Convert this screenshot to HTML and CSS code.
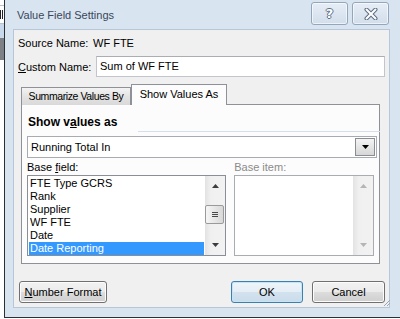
FILE: index.html
```html
<!DOCTYPE html>
<html lang="en">
<head>
  <meta charset="UTF-8" />
  <title>Value Field Settings</title>
  <link rel="stylesheet" href="styles.css">
</head>
<body>

<div class="screen">
  <div class="desk">
    <div class="desk-top"></div>
    <div class="desk-cell"><i></i></div>
    <div class="desk-sel"></div>
    <div class="desk-dark"></div>
    <div class="desk-rest"></div>
  </div>

  <div class="window">
    <div class="titlebar">
      <span class="title">Value Field Settings</span>
      <div class="caption-btns">
        <div class="cap-btn help">?</div>
        <div class="cap-btn">
          <svg width="14" height="12" viewBox="0 0 14 12">
            <path d="M2.5 1.5 L11.5 10.5 M11.5 1.5 L2.5 10.5" stroke="#5d6d82" stroke-width="4" stroke-linecap="round"/>
            <path d="M2.5 1.5 L11.5 10.5 M11.5 1.5 L2.5 10.5" stroke="#fff" stroke-width="2" stroke-linecap="round"/>
          </svg>
        </div>
      </div>
    </div>

    <div class="client">
      <div class="row source">
        <span class="label">Source Name:</span>
        <span>WF FTE</span>
      </div>
      <div class="row custom">
        <span class="label"><u>C</u>ustom Name:</span>
        <div class="textbox">Sum of WF FTE</div>
      </div>

      <div class="tabs">
        <div class="tab">Summarize Values By</div>
        <div class="tab active">Show Values As</div>
      </div>

      <div class="panel">
        <div class="group-title">Show v<u>a</u>lues as</div>
        <div class="combo">
          <span class="combo-text">Running Total In</span>
          <span class="drop">
            <svg width="7" height="4" viewBox="0 0 7 4"><path d="M0 0 H7 L3.5 4 Z" fill="#000"/></svg>
          </span>
        </div>

        <div class="lists">
          <div class="field base">
            <div class="caption">Base <u>f</u>ield:</div>
            <div class="listbox">
              <ul class="items">
                <li>FTE Type GCRS</li>
                <li>Rank</li>
                <li>Supplier</li>
                <li>WF FTE</li>
                <li>Date</li>
                <li class="selected">Date Reporting</li>
              </ul>
              <div class="vscroll">
                <div class="arrow">
                  <svg width="7" height="4" viewBox="0 0 7 4"><path d="M0 4 H7 L3.5 0 Z" fill="#3c3c3c"/></svg>
                </div>
                <div class="track">
                  <div class="thumb"><i></i><i></i><i></i></div>
                </div>
                <div class="arrow">
                  <svg width="7" height="4" viewBox="0 0 7 4"><path d="M0 0 H7 L3.5 4 Z" fill="#3c3c3c"/></svg>
                </div>
              </div>
            </div>
          </div>

          <div class="field item disabled">
            <div class="caption">Base item:</div>
            <div class="listbox">
              <ul class="items"></ul>
              <div class="vscroll">
                <div class="arrow">
                  <svg width="7" height="4" viewBox="0 0 7 4"><path d="M0 4 H7 L3.5 0 Z" fill="#b5b5b5"/></svg>
                </div>
                <div class="track"></div>
                <div class="arrow">
                  <svg width="7" height="4" viewBox="0 0 7 4"><path d="M0 0 H7 L3.5 4 Z" fill="#b5b5b5"/></svg>
                </div>
              </div>
            </div>
          </div>
        </div>
      </div>

      <div class="footer">
        <button class="btn number"><u>N</u>umber Format</button>
        <div class="spacer"></div>
        <button class="btn ok">OK</button>
        <button class="btn cancel">Cancel</button>
      </div>
    </div>

    <svg class="grip" width="8" height="8" viewBox="0 0 8 8">
      <path d="M7 1 L1 7 M7 4 L4 7" stroke="#9aa5b3" stroke-width="1"/>
    </svg>
  </div>
</div>

</body>
</html>
```

FILE: styles.css
```css
* {
  box-sizing: border-box;
}

body {
  margin: 0;
  font-family: "Liberation Sans", Arial, sans-serif;
  font-size: 11px;
  color: #000;
}

.screen {
  display: flex;
  align-items: flex-start;
  width: 400px;
  height: 319px;
  overflow: hidden;
  background: #fff;
}

/* bit of the excel sheet behind the dialog */
.desk {
  width: 4px;
  height: 319px;
  display: flex;
  flex-direction: column;
  background: #fff;
}

.desk-top {
  height: 6px;
  border-bottom: 1px solid #b8c2cf;
}

.desk-cell {
  height: 18px;
  border-bottom: 1px solid #b8c2cf;
  padding-top: 4px;
}

.desk-cell i {
  display: block;
  width: 3px;
  height: 9px;
  border-left: 1px solid #222;
  border-right: 1px solid #222;
}

.desk-sel {
  height: 14px;
  background: #c9d9ec;
}

.desk-dark {
  height: 22px;
  background: #7d8084;
}

.desk-rest {
  flex: 1;
  background: #fff;
}

.window {
  position: relative;
  width: 396px;
  height: 318px;
  display: flex;
  flex-direction: column;
  background: #d9e4f1;
  border-left: 1px solid #2c2f33;
  border-bottom: 1px solid #2c2f33;
  padding: 0 0 9px 8px;
  flex-shrink: 0;
}

.titlebar {
  height: 29px;
  width: 377px;
  display: flex;
  justify-content: space-between;
  align-items: flex-start;
}

.title {
  margin: 8px 0 0 4px;
  font-size: 11px;
  line-height: 15px;
  color: #38475a;
}

.caption-btns {
  display: flex;
  gap: 4px;
  margin: 2px 1px 0 0;
}

.cap-btn {
  width: 37px;
  height: 23px;
  border: 1px solid #94a6bc;
  border-radius: 3px;
  background: linear-gradient(#e6edf6, #d2deec);
  box-shadow: inset 0 0 0 1px rgba(255, 255, 255, 0.6);
  display: flex;
  align-items: center;
  justify-content: center;
}

.cap-btn.help {
  font-family: "DejaVu Sans", sans-serif;
  font-weight: bold;
  font-size: 13px;
  color: #fff;
  text-shadow: 1px 0 #5d6d82, -1px 0 #5d6d82, 0 1px #5d6d82, 0 -1px #5d6d82;
}

.client {
  width: 377px;
  height: 279px;
  background: #f0f0f0;
  border: 1px solid #b7c6d8;
  padding: 5px 4px 0 4px;
  display: flex;
  flex-direction: column;
}

.row {
  display: flex;
  align-items: center;
}

.row .label {
  width: 78px;
  flex-shrink: 0;
}

.source {
  height: 16px;
}

.source .label {
  width: 75px;
}

.custom {
  margin-top: 5px;
  height: 21px;
}

.textbox {
  flex: 1;
  height: 21px;
  background: #fff;
  border: 1px solid #c2c6cc;
  border-top-color: #abadb3;
  padding: 0 3px;
  line-height: 19px;
}

.tabs {
  display: flex;
  align-items: flex-end;
  height: 21px;
  margin: 7px 0 -1px 3px;
  position: relative;
  z-index: 1;
}

.tab {
  height: 18px;
  width: 110px;
  border: 1px solid #8e9197;
  border-bottom: none;
  background: linear-gradient(#f3f3f3, #e3e3e3 50%, #d9d9d9);
  text-align: center;
  font-size: 10.5px;
  line-height: 17px;
  letter-spacing: -0.4px;
  white-space: nowrap;
  overflow: hidden;
}

.tab.active {
  height: 21px;
  width: 96px;
  background: #fcfcfc;
  font-size: 11px;
  line-height: 19px;
  letter-spacing: 0;
}

.panel {
  height: 160px;
  margin: 0 5px 0 3px;
  border: 1px solid #8e9197;
  background: #fcfcfc;
  padding: 0 5px 0 5px;
  display: flex;
  flex-direction: column;
}

.group-title {
  margin: 9px 0 0 1px;
  font-weight: bold;
  font-size: 12px;
  line-height: 16px;
}

.group-title::after {
  content: "";
  display: block;
  height: 1px;
  margin: 1px -6px 0 110px;
  background: #d5dfe9;
}

.combo {
  margin-top: 4px;
  height: 22px;
  width: 350px;
  display: flex;
  align-items: stretch;
  background: #fff;
  border: 1px solid #a8abb1;
  padding: 1px;
}

.combo-text {
  flex: 1;
  padding-left: 2px;
  line-height: 18px;
}

.drop {
  width: 20px;
  display: flex;
  align-items: center;
  justify-content: center;
  border: 1px solid #8a8d92;
  background: linear-gradient(#f4f4f4, #e5e5e5 50%, #d6d6d6);
}

.lists {
  display: flex;
  gap: 8px;
  margin-top: 2px;
}

.field {
  display: flex;
  flex-direction: column;
}

.field.base {
  width: 201px;
}

.field.item {
  width: 141px;
}

.caption {
  height: 15px;
  line-height: 14px;
}

.disabled .caption {
  color: #8b8b8b;
}

.listbox {
  height: 81px;
  display: flex;
  background: #fff;
  border: 1px solid #8b8f95;
}

.disabled .listbox {
  border-color: #a9adb2;
}

.items {
  flex: 1;
  list-style: none;
  margin: 0;
  padding: 1px 1px 0 1px;
}

.items li {
  height: 13px;
  line-height: 13px;
  padding-left: 1px;
  white-space: nowrap;
}

.items li.selected {
  background: #3399ff;
  color: #fff;
}

.vscroll {
  width: 20px;
  display: flex;
  flex-direction: column;
  background: linear-gradient(90deg, #e3e3e3, #f0f0f0 30%, #f2f2f2);
}

.arrow {
  height: 20px;
  display: flex;
  align-items: center;
  justify-content: center;
}

.track {
  flex: 1;
  display: flex;
  flex-direction: column;
  justify-content: center;
  padding-bottom: 2px;
}

.thumb {
  height: 19px;
  margin: 0 1px 0 0;
  border: 1px solid #9a9a9a;
  border-radius: 2px;
  background: linear-gradient(90deg, #f6f6f6, #e7e7e7 50%, #d8d8d8);
  display: flex;
  flex-direction: column;
  justify-content: center;
  align-items: center;
  gap: 1px;
}

.thumb i {
  display: block;
  width: 6px;
  height: 1px;
  background: #4a4a4a;
}

.footer {
  display: flex;
  gap: 9px;
  margin-top: 17px;
  padding: 0 0 0 1px;
}

.spacer {
  flex: 1;
}

.btn {
  height: 22px;
  font-family: inherit;
  font-size: 11px;
  color: #000;
  border: 1px solid #707070;
  border-radius: 3px;
  background: linear-gradient(#f2f2f2, #ebebeb 50%, #dddddd 50%, #cfcfcf);
  box-shadow: inset 0 0 0 1px #fcfcfc;
  padding: 0;
}

.btn.number {
  width: 88px;
}

.btn.ok {
  width: 72px;
  border-color: #3c7fb1;
  background: linear-gradient(#eef5fa, #e5eef5 50%, #d3e2ee 50%, #c9dbea);
  box-shadow: inset 0 0 0 1px #c4e5f6;
}

.btn.cancel {
  width: 73px;
}

.grip {
  position: absolute;
  right: 9px;
  bottom: 10px;
}
```
